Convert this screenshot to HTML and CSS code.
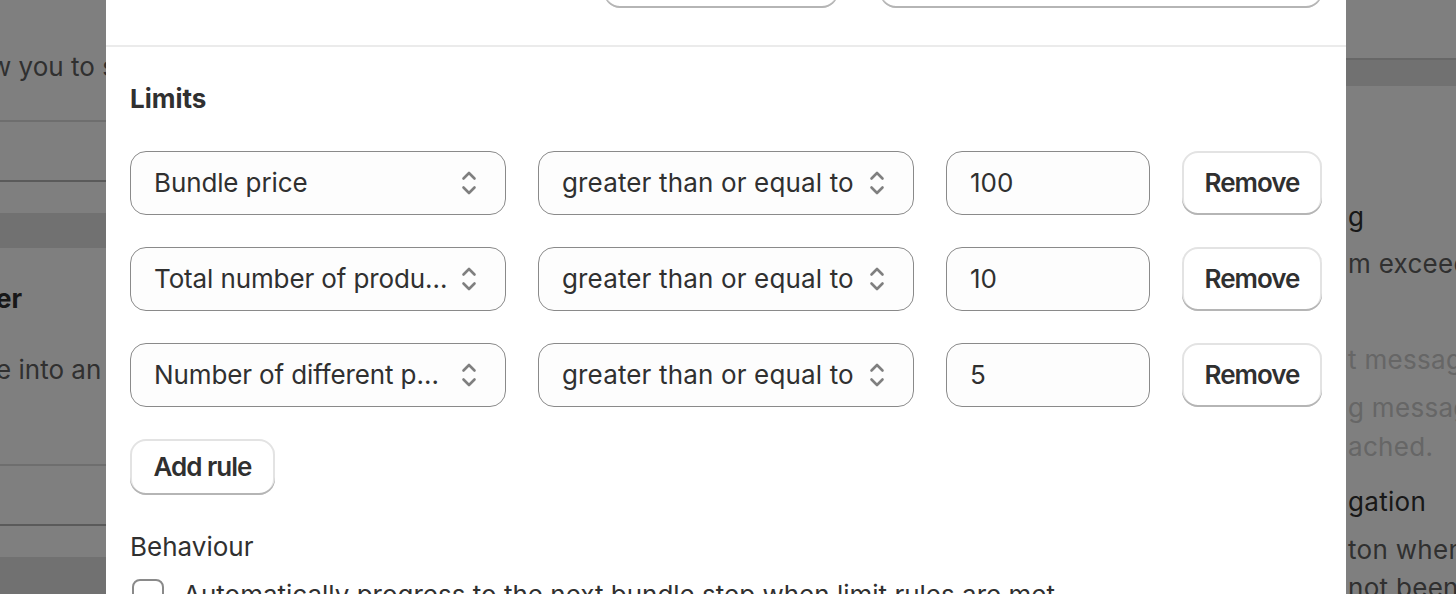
FILE: index.html
```html
<!DOCTYPE html>
<html lang="en">
<head>
<meta charset="utf-8">
<title>Limits</title>
<link rel="stylesheet" href="styles.css">
</head>
<body>
<div class="page">
  <div class="col-left">
    <div class="card card-a">
      <p class="bg-text">w you to set limits on</p>
      <div class="bg-field"></div>
    </div>
    <div class="card card-b">
      <p class="bg-heading">er</p>
      <p class="bg-text">e into an</p>
      <div class="bg-field"></div>
    </div>
  </div>
  <div class="col-right">
    <div class="card card-r0"></div>
    <div class="card card-r1">
      <p class="bg-dark r-l1">g</p>
      <p class="bg-text r-l2">m exceeds</p>
      <p class="bg-muted r-l3">t message</p>
      <p class="bg-muted r-l4">g message<br>ached.</p>
      <p class="bg-dark r-l5">gation</p>
      <p class="bg-text r-l6">ton when<br>not been</p>
    </div>
  </div>
</div>

<div class="backdrop"></div>

<div class="modal">
  <div class="modal-top">
    <button class="btn btn-top-a" type="button"></button>
    <button class="btn btn-top-b" type="button"></button>
  </div>
  <div class="modal-body">
    <h2 class="title">Limits</h2>
    <div class="rules">
      <div class="rule">
        <div class="select select-field">
          <span class="select-text">Bundle price</span>
          <svg class="select-icon" viewBox="0 0 18 28" width="18" height="28"><path d="M3.5 9.5 L9 4 L14.5 9.5 M3.5 18.5 L9 24 L14.5 18.5"/></svg>
        </div>
        <div class="select select-op">
          <span class="select-text">greater than or equal to</span>
          <svg class="select-icon" viewBox="0 0 18 28" width="18" height="28"><path d="M3.5 9.5 L9 4 L14.5 9.5 M3.5 18.5 L9 24 L14.5 18.5"/></svg>
        </div>
        <div class="input">100</div>
        <button class="btn btn-remove" type="button">Remove</button>
      </div>
      <div class="rule">
        <div class="select select-field">
          <span class="select-text">Total number of products</span>
          <svg class="select-icon" viewBox="0 0 18 28" width="18" height="28"><path d="M3.5 9.5 L9 4 L14.5 9.5 M3.5 18.5 L9 24 L14.5 18.5"/></svg>
        </div>
        <div class="select select-op">
          <span class="select-text">greater than or equal to</span>
          <svg class="select-icon" viewBox="0 0 18 28" width="18" height="28"><path d="M3.5 9.5 L9 4 L14.5 9.5 M3.5 18.5 L9 24 L14.5 18.5"/></svg>
        </div>
        <div class="input">10</div>
        <button class="btn btn-remove" type="button">Remove</button>
      </div>
      <div class="rule">
        <div class="select select-field">
          <span class="select-text">Number of different products</span>
          <svg class="select-icon" viewBox="0 0 18 28" width="18" height="28"><path d="M3.5 9.5 L9 4 L14.5 9.5 M3.5 18.5 L9 24 L14.5 18.5"/></svg>
        </div>
        <div class="select select-op">
          <span class="select-text">greater than or equal to</span>
          <svg class="select-icon" viewBox="0 0 18 28" width="18" height="28"><path d="M3.5 9.5 L9 4 L14.5 9.5 M3.5 18.5 L9 24 L14.5 18.5"/></svg>
        </div>
        <div class="input">5</div>
        <button class="btn btn-remove" type="button">Remove</button>
      </div>
    </div>
    <button class="btn btn-add" type="button">Add rule</button>
    <p class="label">Behaviour</p>
    <label class="check">
      <span class="check-box"></span>
      <span class="check-label">Automatically progress to the next bundle step when limit rules are met</span>
    </label>
  </div>
</div>
</body>
</html>
```

FILE: styles.css
```css
html, body {
  margin: 0;
  padding: 0;
}

body {
  width: 1456px;
  height: 594px;
  overflow: hidden;
  background: #e3e3e3;
  font-family: Inter, "Noto Sans", sans-serif;
  color: #303030;
}

p, h2 {
  margin: 0;
}

/* ---------- underlying page ---------- */
.page {
  display: flex;
  justify-content: space-between;
  height: 594px;
  white-space: nowrap;
  font-size: 26px;
  line-height: 40px;
}

.col-left {
  width: 300px;
  margin-left: -10px;
}

.col-right {
  width: 118px;
}

.card {
  background: #ffffff;
}

.card-a {
  padding: 47px 0 31px 0;
}

.bg-field {
  height: 62px;
  box-sizing: border-box;
  border-top: 2px solid #dcdcdc;
  border-bottom: 2px solid #b5b5b5;
}

.card-a .bg-field {
  margin-top: 33px;
}

.card-b {
  margin-top: 35px;
  padding: 31px 0 31px 0;
}

.card-b .bg-heading {
  padding-left: 6px;
}

.card-b .bg-text {
  margin-top: 31px;
  padding-left: 6px;
}

.card-b .bg-field {
  margin-top: 74px;
}

.bg-text {
  color: #616161;
}

.bg-heading {
  font-weight: 650;
  color: #303030;
}

.bg-dark {
  color: #303030;
}

.bg-muted {
  color: #cccccc;
}

.card-r0 {
  height: 58px;
  border-bottom: 2px solid #cfcfcf;
}

.card-r1 {
  margin-top: 26px;
  padding: 111px 0 0 10px;
  height: 600px;
  box-sizing: border-box;
  letter-spacing: 0.3px;
}

.r-l2 { margin-top: 7px; }
.r-l3 { margin-top: 56px; }
.r-l4 { margin-top: 8px; line-height: 39px; }
.r-l5 { margin-top: 16px; }
.r-l6 { margin-top: 9px; line-height: 38px; }

/* ---------- overlay ---------- */
.backdrop {
  position: fixed;
  inset: 0;
  background: rgba(0, 0, 0, 0.5);
}

.modal {
  position: fixed;
  top: 0;
  left: 106px;
  width: 1240px;
  height: 594px;
  background: #ffffff;
  overflow: hidden;
}

.modal-top {
  height: 47px;
  box-sizing: border-box;
  display: flex;
  justify-content: flex-end;
  align-items: flex-end;
  gap: 42px;
  padding: 0 24px 37px 24px;
  border-bottom: 2px solid #ebebeb;
}

.modal-top .btn {
  flex: none;
  height: 56px;
}

.btn-top-a { width: 234px; }
.btn-top-b { width: 442px; }

.modal-body {
  padding: 32px 24px 0 24px;
}

.title {
  font-size: 26px;
  line-height: 40px;
  font-weight: 650;
  color: #303030;
}

.rules {
  margin-top: 32px;
  display: flex;
  flex-direction: column;
  gap: 32px;
}

.rule {
  display: flex;
  gap: 32px;
  height: 64px;
}

.select,
.input {
  box-sizing: border-box;
  height: 64px;
  border: 1px solid #8a8a8a;
  border-radius: 16px;
  background: #fdfdfd;
  display: flex;
  align-items: center;
  padding-left: 23px;
  padding-bottom: 1px;
  font-size: 26px;
  color: #303030;
  white-space: nowrap;
}

.select {
  width: 376px;
  padding-right: 27px;
}

.select-text {
  flex: 1;
  min-width: 0;
  overflow: hidden;
  text-overflow: ellipsis;
}

.select-field .select-text {
  letter-spacing: -0.12px;
}

.select-op .select-text {
  letter-spacing: 0.15px;
}

.select-icon {
  flex: none;
  margin-left: 12px;
}

.select-icon path {
  fill: none;
  stroke: #7f7f7f;
  stroke-width: 2.6;
  stroke-linecap: round;
  stroke-linejoin: round;
}

.input {
  width: 204px;
}

.btn {
  font-family: Inter, "Noto Sans", sans-serif;
  font-size: 26px;
  font-weight: 600;
  letter-spacing: -1px;
  color: #303030;
  background: #ffffff;
  border: none;
  border-radius: 16px;
  box-shadow: inset 0 -2px 0 0 #b5b5b5, inset 0 0 0 2px #e3e3e3;
  padding: 0 0 1px 0;
  cursor: pointer;
}

.btn-remove {
  width: 140px;
  height: 64px;
}

.btn-add {
  display: block;
  margin-top: 32px;
  height: 56px;
  width: 145px;
}

.label {
  margin-top: 32px;
  font-size: 26px;
  line-height: 40px;
  color: #303030;
}

.check {
  margin-top: 8px;
  display: flex;
  align-items: center;
  gap: 19px;
  height: 40px;
  font-size: 26px;
  line-height: 40px;
  color: #303030;
}

.check-box {
  flex: none;
  margin-left: 2px;
  width: 32px;
  height: 32px;
  box-sizing: border-box;
  border: 2px solid #8a8a8a;
  border-radius: 8px;
  background: #ffffff;
}
```
